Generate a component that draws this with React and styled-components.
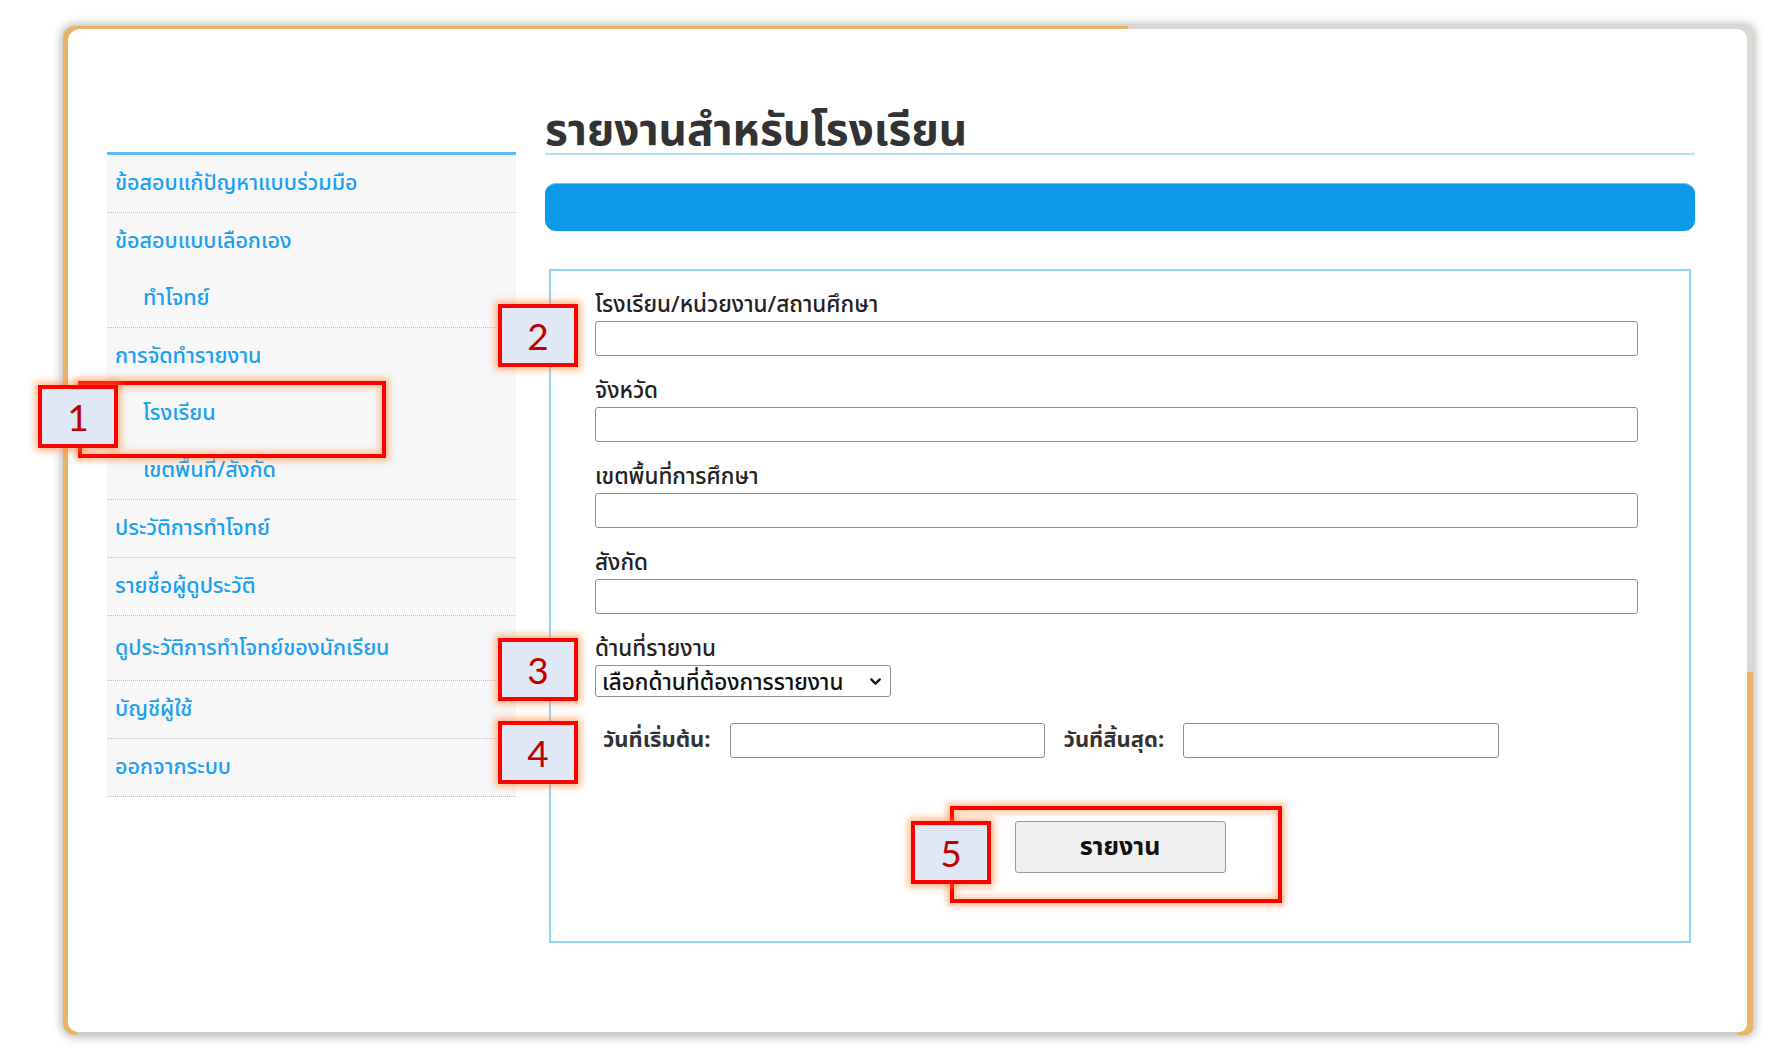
import React from "react";
import styled, { createGlobalStyle } from "styled-components";
import { ChevronDown } from "lucide-react";

const THAI = `"Noto Sans Thai", "Noto Sans Thai UI", "Leelawadee UI", Tahoma, "Noto Sans", sans-serif`;

const GlobalStyle = createGlobalStyle`
    html, body {
        margin: 0;
        padding: 0;
        background: #fff;
    }
    body {
        font-family: ${THAI};
    }
`;

const Page = styled.div`
    position: relative;
    width: 1782px;
    height: 1063px;
    padding: 26px 29px 28px 63px;
    box-sizing: border-box;
`;

const Frame = styled.div`
    height: 100%;
    box-sizing: border-box;
    padding: 3px 6px 3px 5px;
    border-radius: 12px 8px 8px 12px;
    background:
        linear-gradient(#dcd8d3, #dcd8d3) right top / 37% 64% no-repeat,
        linear-gradient(#cfcfcf, #cfcfcf) 14px bottom / calc(100% - 30px) 3px no-repeat,
        #e9b368;
    box-shadow: 0 0 10px 2px rgba(0, 0, 0, 0.28);
`;

const Card = styled.div`
    height: 100%;
    box-sizing: border-box;
    background: #fff;
    border-radius: 12px 10px 8px 10px;
    display: flex;
    align-items: flex-start;
    gap: 29px;
    padding: 82px 52px 0 39px;
`;

const Sidebar = styled.nav`
    width: 409px;
    flex: none;
    margin-top: 41px;
    border-top: 3px solid #5cbdf5;
    background: #f7f7f7;
`;

const Group = styled.div`
    border-bottom: 1px dotted #bdbdbd;
`;

const MenuLink = styled.a`
    display: flex;
    align-items: center;
    height: ${(p) => (p.$tall ? "64px" : "57px")};
    padding-left: ${(p) => (p.$sub ? "36px" : "8px")};
    font-size: 21.5px;
    font-weight: 500;
    color: #1aa0f0;
    text-decoration: none;
    cursor: pointer;
`;

const Main = styled.main`
    flex: 1;
    display: flex;
    flex-direction: column;
`;

const Title = styled.h1`
    margin: 0;
    font-size: 44px;
    line-height: 42px;
    font-weight: 700;
    color: #333;
    border-bottom: 2px solid #b5e1fb;
`;

const Bar = styled.div`
    margin-top: 28px;
    height: 48px;
    border-radius: 11px;
    background: #0c99e8;
    border-top: 1px solid #6cc3f4;
    box-sizing: border-box;
`;

const FormBox = styled.form`
    margin: 38px 4px 0;
    height: 674px;
    box-sizing: border-box;
    border: 2px solid #93d3f8;
    padding: 20px 51px 0 44px;
    display: flex;
    flex-direction: column;
`;

const Field = styled.div`
    display: flex;
    flex-direction: column;
    align-items: flex-start;
    gap: 1px;
    margin-bottom: ${(p) => (p.$last ? "0" : "21px")};
`;

const Label = styled.label`
    font-size: 22.5px;
    font-weight: 500;
    line-height: 29px;
    color: #222;
`;

const TextInput = styled.input`
    height: 35px;
    box-sizing: border-box;
    border: 1.5px solid #8e8e8e;
    border-radius: 3px;
    font-size: 18px;
    padding: 0 6px;
    width: ${(p) => p.$w || "100%"};
`;

const SelectWrap = styled.div`
    position: relative;
    width: 296px;
`;

const Select = styled.select`
    appearance: none;
    width: 100%;
    height: 32px;
    border: 1.5px solid #8e8e8e;
    border-radius: 3px;
    font-family: ${THAI};
    font-size: 22.5px;
    font-weight: 500;
    color: #111;
    background: #fff;
    padding: 0 2px 0 6px;
`;

const Chevron = styled(ChevronDown)`
    position: absolute;
    right: 7px;
    top: 8px;
    pointer-events: none;
    color: #111;
`;

const DateRow = styled.div`
    display: flex;
    align-items: center;
    gap: 19px;
    padding-left: 8px;
    margin-top: 26px;
`;

const DateLabel = styled.label`
    font-size: 22px;
    font-weight: 700;
    color: #333;
`;

const ButtonRow = styled.div`
    display: flex;
    justify-content: center;
    margin: 63px -7px 0 0;
`;

const SubmitButton = styled.button`
    width: 211px;
    height: 52px;
    background: #efefef;
    border: 1.5px solid #9a9a9a;
    border-radius: 3px;
    font-family: ${THAI};
    font-size: 25px;
    font-weight: 700;
    color: #111;
    cursor: pointer;
`;

/* red callout marks drawn on top of the screenshot */
const Highlight = styled.div`
    position: absolute;
    box-sizing: border-box;
    border: 4px solid #ff0000;
    box-shadow: 0 0 6px 3px rgba(255, 140, 60, 0.55), inset 0 0 6px 3px rgba(255, 150, 80, 0.5);
`;

const Badge = styled.div`
    position: absolute;
    box-sizing: border-box;
    width: 80px;
    height: 63px;
    border: 4px solid #ff0000;
    background: #dfe8f4;
    box-shadow: 0 0 7px 3px rgba(255, 130, 50, 0.55);
    display: flex;
    align-items: center;
    justify-content: center;
    font-family: Lato, "Open Sans", sans-serif;
    font-size: 37px;
    color: #c00000;
`;

const menu = [
    [{ label: "ข้อสอบแก้ปัญหาแบบร่วมมือ" }],
    [{ label: "ข้อสอบแบบเลือกเอง" }, { label: "ทำโจทย์", sub: true }],
    [
        { label: "การจัดทำรายงาน" },
        { label: "โรงเรียน", sub: true },
        { label: "เขตพื้นที่/สังกัด", sub: true },
    ],
    [{ label: "ประวัติการทำโจทย์" }],
    [{ label: "รายชื่อผู้ดูประวัติ" }],
    [{ label: "ดูประวัติการทำโจทย์ของนักเรียน", tall: true }],
    [{ label: "บัญชีผู้ใช้" }],
    [{ label: "ออกจากระบบ" }],
];

const fields = ["โรงเรียน/หน่วยงาน/สถานศึกษา", "จังหวัด", "เขตพื้นที่การศึกษา", "สังกัด"];

export default function App() {
    return (
        <Page>
            <GlobalStyle />
            <Frame>
                <Card>
                    <Sidebar>
                        {menu.map((group, i) => (
                            <Group key={i}>
                                {group.map((item) => (
                                    <MenuLink key={item.label} $sub={item.sub} $tall={item.tall}>
                                        {item.label}
                                    </MenuLink>
                                ))}
                            </Group>
                        ))}
                    </Sidebar>

                    <Main>
                        <Title>รายงานสำหรับโรงเรียน</Title>
                        <Bar />
                        <FormBox onSubmit={(e) => e.preventDefault()}>
                            {fields.map((f) => (
                                <Field key={f}>
                                    <Label>{f}</Label>
                                    <TextInput type="text" />
                                </Field>
                            ))}
                            <Field $last>
                                <Label>ด้านที่รายงาน</Label>
                                <SelectWrap>
                                    <Select defaultValue="">
                                        <option value="">เลือกด้านที่ต้องการรายงาน</option>
                                    </Select>
                                    <Chevron size={17} strokeWidth={3.2} />
                                </SelectWrap>
                            </Field>
                            <DateRow>
                                <DateLabel>วันที่เริ่มต้น:</DateLabel>
                                <TextInput $w="315px" />
                                <DateLabel>วันที่สิ้นสุด:</DateLabel>
                                <TextInput $w="316px" />
                            </DateRow>
                            <ButtonRow>
                                <SubmitButton type="submit">รายงาน</SubmitButton>
                            </ButtonRow>
                        </FormBox>
                    </Main>
                </Card>
            </Frame>

            <Highlight style={{ left: 78, top: 381, width: 308, height: 77 }} />
            <Badge style={{ left: 38, top: 385 }}>1</Badge>
            <Badge style={{ left: 498, top: 304 }}>2</Badge>
            <Badge style={{ left: 498, top: 638 }}>3</Badge>
            <Badge style={{ left: 498, top: 721 }}>4</Badge>
            <Highlight style={{ left: 950, top: 806, width: 332, height: 97 }} />
            <Badge style={{ left: 911, top: 821 }}>5</Badge>
        </Page>
    );
}
